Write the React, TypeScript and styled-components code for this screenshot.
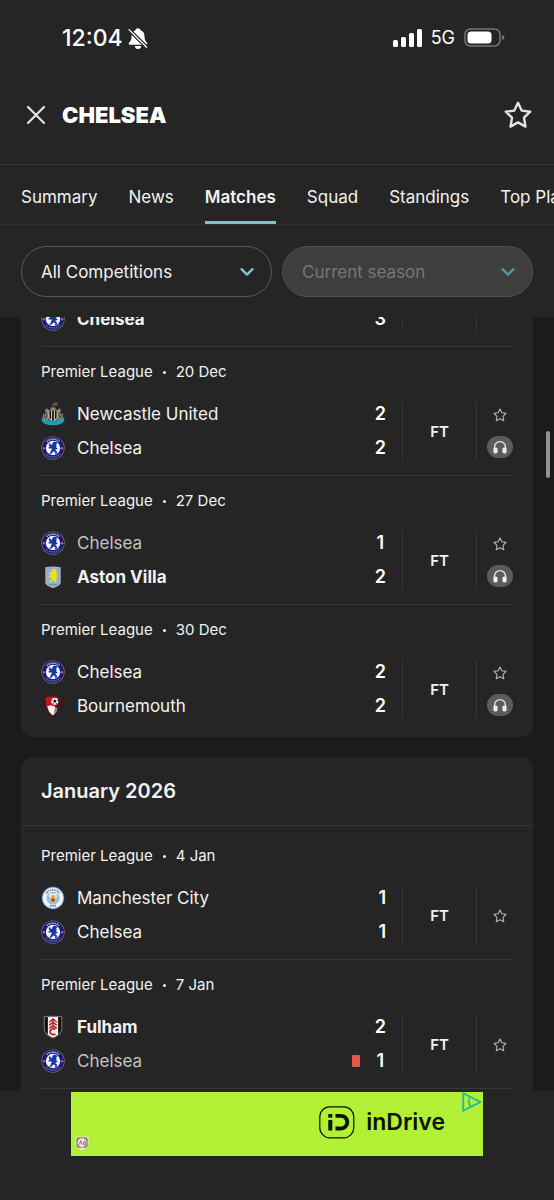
import React from "react";
import styled, { createGlobalStyle } from "styled-components";

const color = {
  page: "#1b1b1b",
  surface: "#252525",
  line: "#373737",
  text: "#f2f2f2",
  muted: "#c4c4c4",
  accent: "#7cc5d1",
};

const GlobalStyle = createGlobalStyle`
  * { box-sizing: border-box; }
  body {
    margin: 0;
    background: ${color.page};
    color: ${color.text};
    font-family: Inter, "Liberation Sans", sans-serif;
    -webkit-font-smoothing: antialiased;
  }
  button, select { font-family: inherit; }
`;

const Screen = styled.div`
  position: relative;
  display: flex;
  flex-direction: column;
  height: 100vh;
  overflow: hidden;
`;

const TopArea = styled.header`
  flex: none;
  background: ${color.surface};
`;

const StatusBar = styled.div`
  display: flex;
  align-items: center;
  justify-content: space-between;
  height: 76px;
  padding: 0 49px 0 62px;
  color: #fff;
`;

const StatusGroup = styled.div<{ $gap: number }>`
  display: flex;
  align-items: center;
  gap: ${(p) => p.$gap}px;
`;

const Clock = styled.time`
  font-size: 23px;
  line-height: 28px;
  font-weight: 500;
`;

const Network = styled.span`
  font-size: 18px;
  line-height: 24px;
`;

const TitleBar = styled.div`
  display: flex;
  align-items: center;
  height: 89px;
  padding: 0 22px 10px 24px;
  border-bottom: 1px solid ${color.line};
`;

const IconButton = styled.button`
  display: grid;
  place-items: center;
  padding: 0;
  border: 0;
  background: none;
  color: #e4e4e4;
`;

const Title = styled.h1`
  flex: 1;
  margin: 0 0 0 14px;
  color: #fff;
  font-size: 22px;
  line-height: 28px;
  font-weight: 900;
`;

const Tabs = styled.nav`
  display: flex;
  gap: 31px;
  height: 60px;
  padding: 0 21px;
  overflow: hidden;
  border-bottom: 1px solid #303030;
`;

const Tab = styled.a<{ $active?: boolean }>`
  flex: none;
  padding-top: 20px;
  border-bottom: 3px solid ${(p) => (p.$active ? color.accent : "transparent")};
  color: ${color.text};
  font-size: 17px;
  line-height: 24px;
  font-weight: ${(p) => (p.$active ? 600 : 400)};
  text-decoration: none;
  white-space: nowrap;
`;

const Filters = styled.div`
  display: grid;
  grid-template-columns: 1fr 1fr;
  gap: 10px;
  padding: 21px 21px 20px;
`;

const FilterBox = styled.label`
  position: relative;
  display: block;
`;

const FilterSelect = styled.select`
  display: block;
  width: 100%;
  height: 51px;
  padding: 0 48px 0 19px;
  appearance: none;
  border: 1px solid #5a5a5a;
  border-radius: 26px;
  background: ${color.surface};
  color: ${color.text};
  font-size: 17px;
  opacity: 1;

  &:disabled {
    border-color: #505050;
    background: #3e3e3e;
    color: #767676;
  }
`;

const FilterChevron = styled.svg<{ $dim?: boolean }>`
  position: absolute;
  top: 18px;
  right: 17px;
  pointer-events: none;
  color: ${(p) => (p.$dim ? "#5895a0" : color.accent)};
`;

const Feed = styled.main`
  flex: 1;
  min-height: 0;
  padding: 0 21px;
  overflow: hidden;
`;

const Card = styled.section<{ $continued?: boolean; $more?: boolean }>`
  margin-bottom: 20px;
  padding-bottom: ${(p) => (p.$more ? 32 : 4)}px;
  overflow: hidden;
  border-radius: ${(p) => (p.$continued ? "0 0 12px 12px" : "12px")};
  background: ${color.surface};
`;

const CardTitle = styled.h2`
  margin: 0 0 5px;
  padding: 20px 20px;
  border-bottom: 1px solid ${color.line};
  color: ${color.text};
  font-size: 20px;
  line-height: 28px;
  font-weight: 600;
`;

const MatchItem = styled.article<{ $last?: boolean; $scrolled?: boolean }>`
  margin: ${(p) => (p.$scrolled ? "-10px" : "0")} 20px 0;
  padding: ${(p) => (p.$scrolled ? "0" : "13px")} 0 15px;
  border-bottom: ${(p) => (p.$last ? "0" : `1px solid ${color.line}`)};
`;

const Meta = styled.p`
  display: flex;
  align-items: center;
  gap: 10px;
  margin: 0 0 18px;
  font-size: 15px;
  line-height: 24px;
`;

const Dot = styled.span`
  width: 3px;
  height: 3px;
  border-radius: 50%;
  background: ${color.text};
`;

const MatchBody = styled.div`
  display: flex;
`;

const Teams = styled.div`
  display: flex;
  flex: 1;
  flex-direction: column;
  gap: 10px;
`;

const Team = styled.div<{ $result: Result }>`
  display: flex;
  align-items: center;
  gap: 12px;
  height: 24px;
  color: ${(p) => (p.$result === "lost" ? color.muted : color.text)};
  font-size: 17px;
  line-height: 24px;
  font-weight: ${(p) => (p.$result === "won" ? 700 : 400)};
`;

const TeamName = styled.span`
  flex: 1;
`;

const RedCard = styled.span`
  width: 8px;
  height: 12px;
  margin-right: 15px;
  border-radius: 1px;
  background: #e8534c;
`;

const Scores = styled.div`
  display: flex;
  flex-direction: column;
  align-items: center;
  gap: 10px;
  padding-right: 16px;
  color: #fff;
  font-size: 18px;
  line-height: 24px;
  font-weight: 600;
`;

const Status = styled.div`
  display: grid;
  place-items: center;
  width: 75px;
  border: solid ${color.line};
  border-width: 0 1px;
  font-size: 15px;
  font-weight: 600;
`;

const Actions = styled.div`
  display: flex;
  flex-direction: column;
  align-items: center;
  justify-content: center;
  gap: 10px;
  width: 36px;
  padding-left: 10px;
`;

const StarButton = styled(IconButton)`
  width: 24px;
  height: 24px;
  padding-top: 1px;
  color: #b4b4b4;
`;

const AudioButton = styled(IconButton)`
  width: 26px;
  height: 22px;
  margin-bottom: 2px;
  border-radius: 11px;
  background: #5b5b5b;
  color: #ececec;
`;

const ScrollThumb = styled.div`
  position: absolute;
  top: 431px;
  right: 4px;
  width: 4px;
  height: 47px;
  border-radius: 2px;
  background: #929292;
`;

const AdArea = styled.footer`
  display: flex;
  flex: none;
  justify-content: center;
  padding: 1px 0 44px;
  background: ${color.surface};
`;

const Banner = styled.a`
  position: relative;
  display: flex;
  align-items: center;
  justify-content: flex-end;
  gap: 11px;
  width: 412px;
  height: 64px;
  padding: 0 38px 4px 0;
  background: #b1f035;
  color: #0c1404;
  text-decoration: none;
`;

const BannerName = styled.span`
  font-size: 23px;
  line-height: 28px;
  font-weight: 600;
`;

const AdChoices = styled.svg`
  position: absolute;
  top: 0;
  right: 1px;
`;

const AdBadge = styled.svg`
  position: absolute;
  left: 4px;
  bottom: 6px;
`;

type Result = "won" | "lost" | "drew";
type Club = "Chelsea" | "Newcastle United" | "Aston Villa" | "Bournemouth" | "Manchester City" | "Fulham";

interface Side {
  club: Club;
  score: number;
  sentOff?: boolean;
}

interface Match {
  date: string;
  sides: [Side, Side];
  audio?: boolean;
}

const december: Match[] = [
  { date: "20 Dec", audio: true, sides: [{ club: "Newcastle United", score: 2 }, { club: "Chelsea", score: 2 }] },
  { date: "27 Dec", audio: true, sides: [{ club: "Chelsea", score: 1 }, { club: "Aston Villa", score: 2 }] },
  { date: "30 Dec", audio: true, sides: [{ club: "Chelsea", score: 2 }, { club: "Bournemouth", score: 2 }] },
];

const january: Match[] = [
  { date: "4 Jan", sides: [{ club: "Manchester City", score: 1 }, { club: "Chelsea", score: 1 }] },
  { date: "7 Jan", sides: [{ club: "Fulham", score: 2 }, { club: "Chelsea", score: 1, sentOff: true }] },
];

const tabs = ["Summary", "News", "Matches", "Squad", "Standings", "Top Players"];

const crests: Record<Club, React.ReactNode> = {
  Chelsea: (
    <>
      <circle cx="12" cy="12" r="11.6" fill="#8d8068" />
      <circle cx="12" cy="12" r="11" fill="#171b78" />
      <path d="M5.8 5.6a8.9 8.9 0 0 1 12.4 0" fill="none" stroke="#c4c7e4" strokeWidth="1.6" strokeDasharray="1.3 .8" />
      <path d="M5 17.6a8.9 8.9 0 0 0 14 0" fill="none" stroke="#7f84c2" strokeWidth="1.4" strokeDasharray="1 .9" />
      <circle cx="2.900" cy="12.200" r="1.300" fill="#c85a78" />
      <circle cx="21.100" cy="12.200" r="1.300" fill="#c85a78" />
      <circle cx="12" cy="12" r="7.200" fill="#f5f6fb" />
      <path
        d="M7.800 8l1.400-1.200.5 1.900 1.300.3.400-1.900 1.900-1.500 2.100.6 1 1.300-1.300.9.600 1.700-.8 1.300 1.700.6-.3 1.300-1.600-.1-.2 1 1.700 1.500-.4 1.900-1.800.6.300-1.600-1.500-1-1.100.2-.4 1.400-2 .5-1.100-.8 1.500-.8.2-1.600 1-1.300-.8-.9-2 .5-.8-1.200 1.900-1-1.300-.8z"
        fill="#1935a4"
      />
    </>
  ),
  "Newcastle United": (
    <>
      <path d="M12 1v5M12.300 1.200h4l-1 1 1 1h-4" fill="#a03a2c" stroke="#7d6d4c" strokeWidth=".7" />
      <path d="M9.200 5.600h5.600l-.5 2.600H9.700z" fill="#8b8574" />
      <path d="M4.200 7.400l2-1.200 1.500 2.200-.6 3 1.300 1.600-1 5.400-3.600-.9-2-2.200.2-4 1.400 1.200 1-1.300z" fill="#8c8371" />
      <path d="M19.800 7.400l-2-1.200-1.500 2.200.6 3-1.300 1.600 1 5.400 3.600-.9 2-2.200-.2-4-1.400 1.200-1-1.300z" fill="#8c8371" />
      <path d="M4 9.600l2 3.400-.8 3M20 9.600L18 13l.8 3M2.900 13l1.600 3M21.100 13l-1.600 3" fill="none" stroke="#34322e" strokeWidth=".8" />
      <path d="M7.400 8.200h9.200v6.400c0 2.400-2 4.200-4.600 5.200-2.600-1-4.600-2.800-4.600-5.200z" fill="#d9d1bf" />
      <path d="M8.400 8.600h1.700v9l-1.700-1.700zM11.100 8.600h1.800V19h-1.800zM13.900 8.600h1.700v7.300l-1.700 1.700z" fill="#1a1a1a" />
      <path d="M.8 15.400c3 1 4.800 3 11.200 3s8.200-2 11.200-3v3.600c-2 3-5.900 4.200-11.200 4.200S2.800 22 .8 19z" fill="#259fb8" />
      <path d="M4 19.300c4.800 2.200 11.200 2.200 16 0" fill="none" stroke="#1d86a0" strokeWidth="1" strokeDasharray="1.200 .800" />
    </>
  ),
  "Aston Villa": (
    <>
      <path d="M4.300 2.200Q12 .8 19.700 2.200v15.600Q19 21 12 23.200 5 21 4.300 17.800z" fill="#c3a9bc" />
      <path d="M5.300 3.100Q12 1.900 18.700 3.100v14.500Q18 20.200 12 22.200 6 20.200 5.300 17.600z" fill="#86b2d6" />
      <path
        d="M10.700 4.200l3.200-.6 1.900 1.800-.8 1.400 1.500 1.400-1 2 1 1.600-1.500 1.200.8 2-.8 2.200-1.900.6.300-2.200-1.600-.6-.9 1.800-2.600.8-.3-1.600 1.800-1 .6-2.400-2.400.2-.7-1.500 2.400-1.200-1.900-1.400.5-1.700 2 .5z"
        fill="#f0dc1e"
      />
      <path d="M8 19.400q4 1.200 8 0" fill="none" stroke="#6a84ad" strokeWidth="1" />
    </>
  ),
  Bournemouth: (
    <>
      <path d="M3 2.200q9-1.600 18 0l-1 9.300q-1.500 7-8 11.500-6.500-4.500-8-11.500z" fill="#3a1413" />
      <path d="M4.200 3.200q7.800-1.300 15.600 0l-.9 8q-1.500 6.200-6.900 10.300-5.400-4.100-6.900-10.300z" fill="#c3161c" />
      <path d="M17 3l2.800.2-.9 8q-1.500 6.200-6.900 10.300z" fill="#451b1a" />
      <path d="M6.200 12.500l3.300-1.200 3.700 1 2.600 2.700-1.600 4.200-2.400 2.300-3.600-3.600z" fill="#f5f2f1" />
      <path d="M14 13.200l2.600.6-.8 3.600-3 3.400.6-4z" fill="#8d8583" />
      <circle cx="13.800" cy="7.200" r="3.500" fill="#f8f8f8" />
      <path d="M13.800 5.600l1.600 1.100-.6 1.900h-2l-.6-1.900z" fill="#111" />
      <path d="M13.800 3.700v1M17 6.400l-1 .4M15.800 10l-.7-.9M11.800 10l.7-.9M10.600 6.400l1 .4" stroke="#222" strokeWidth=".9" />
    </>
  ),
  "Manchester City": (
    <>
      <circle cx="12" cy="12" r="11.400" fill="#3d678e" />
      <circle cx="12" cy="12" r="10.700" fill="#b5d9ee" />
      <circle cx="12" cy="12" r="9.900" fill="#f0f4f6" />
      <path d="M5.300 7.400a8.100 8.100 0 0 1 13.400 0" fill="none" stroke="#54708f" strokeWidth="1.700" strokeDasharray="1 .700" />
      <path d="M9 19.500a8.100 8.100 0 0 0 6 0" fill="none" stroke="#54708f" strokeWidth="1.700" strokeDasharray="1 .700" />
      <circle cx="12" cy="12.200" r="6.500" fill="#8dbfe0" />
      <path d="M8 7.600h8v5.200q-.8 3.600-4 5.300-3.200-1.700-4-5.300z" fill="#d9c27c" />
      <path d="M8 7.600h8v3.700H8z" fill="#f1ead0" />
      <path d="M10 9.400h4l-.6 1.500h-2.800z" fill="#b59345" />
      <circle cx="12" cy="14" r="2" fill="#b14850" />
    </>
  ),
  Fulham: (
    <>
      <path d="M2.800 1.600q9.200-1.700 18.400 0v13.200q-1.500 5.400-9.200 8.600-7.700-3.200-9.200-8.600z" fill="#909090" />
      <path d="M3.600 2.300q8.400-1.500 16.800 0v12.400q-1.500 4.700-8.400 7.800-6.900-3.100-8.400-7.800z" fill="#111" />
      <path d="M6.900 2q5.100-.7 10.200 0v17.400q-2 1.800-5.100 3.100-3.100-1.300-5.100-3.100z" fill="#f7f5f4" />
      <path d="M8.200 7.200L12 4l3.800 3.200M8.200 10.400L12 7.200l3.800 3.200M8.200 13.400l3.800-3 3.800 3M12 4v9" fill="none" stroke="#bb2025" strokeWidth="1.400" />
      <path d="M14.500 14.200q-2.400-1.200-4.300.2-2 2-.6 4 2 1.900 4.900.6" fill="none" stroke="#bb2025" strokeWidth="1.700" />
    </>
  ),
};

const Crest = ({ club }: { club: Club }) => (
  <svg width="24" height="24" viewBox="0 0 24 24" aria-hidden="true">
    {crests[club]}
  </svg>
);

const Star = ({ size, weight }: { size: number; weight: number }) => (
  <svg width={size} height={size} viewBox="0 0 28 28" fill="none" stroke="currentColor" strokeWidth={weight} strokeLinejoin="round" aria-hidden="true">
    <path d="M14 1.800L17.700 9.600L26.200 10.700L20 16.700L21.500 25.600L14 21.400L6.500 25.600L8 16.700L1.800 10.700L10.300 9.600Z" />
  </svg>
);

const Headphones = () => (
  <svg width="14" height="13" viewBox="0 0 14 13" aria-hidden="true">
    <path d="M1.500 8V6.200a5.500 5.500 0 0 1 11 0V8" fill="none" stroke="currentColor" strokeWidth="1.300" />
    <rect x="0.400" y="6.400" width="4.200" height="6" rx="1.700" fill="currentColor" />
    <rect x="9.400" y="6.400" width="4.200" height="6" rx="1.700" fill="currentColor" />
  </svg>
);

const Chevron = ({ dim }: { dim?: boolean }) => (
  <FilterChevron $dim={dim} width="16" height="16" viewBox="0 0 16 16" fill="none" stroke="currentColor" strokeWidth="2.400" strokeLinecap="round" strokeLinejoin="round">
    <path d="M2.500 5.200L8 10.600L13.500 5.200" />
  </FilterChevron>
);

const resultOf = (own: number, other: number): Result => (own > other ? "won" : own < other ? "lost" : "drew");

const MatchRow = ({ match, last }: { match: Match; last?: boolean }) => {
  const [home, away] = match.sides;
  return (
    <MatchItem $last={last}>
      <Meta>
        Premier League <Dot /> {match.date}
      </Meta>
      <MatchBody>
        <Teams>
          {match.sides.map((side) => (
            <Team key={side.club} $result={side === home ? resultOf(home.score, away.score) : resultOf(away.score, home.score)}>
              <Crest club={side.club} />
              <TeamName>{side.club}</TeamName>
              {side.sentOff && <RedCard />}
            </Team>
          ))}
        </Teams>
        <Scores>
          <span>{home.score}</span>
          <span>{away.score}</span>
        </Scores>
        <Status>FT</Status>
        <Actions>
          <StarButton aria-label="Follow match">
            <Star size={14} weight={2.200} />
          </StarButton>
          {match.audio && (
            <AudioButton aria-label="Listen">
              <Headphones />
            </AudioButton>
          )}
        </Actions>
      </MatchBody>
    </MatchItem>
  );
};

export default function App() {
  return (
    <Screen>
      <GlobalStyle />
      <TopArea>
        <StatusBar>
          <StatusGroup $gap={5}>
            <Clock>12:04</Clock>
            <svg width="20" height="21" viewBox="0 0 20 21" aria-hidden="true">
              <path d="M10 .3c-1.400 0-2.400.9-2.600 2C4.600 3.200 3.500 5.600 3.500 8.600c0 3.200-.7 4.200-2.300 5.900-1 1-.6 2.200.9 2.200h15.800c1.500 0 1.900-1.200.9-2.200-1.600-1.700-2.300-2.700-2.300-5.900 0-3-1.100-5.400-3.900-6.300C12.400 1.200 11.400.3 10 .3zM6.900 17.900a3.100 3 0 0 0 6.200 0z" fill="#fff" />
              <path d="M0 .6L19.500 20.100" stroke="#252525" strokeWidth="3.600" />
              <path d="M1 1.600L18.600 19.200" stroke="#fff" strokeWidth="1.300" strokeLinecap="round" />
            </svg>
          </StatusGroup>
          <StatusGroup $gap={9}>
            <svg width="29" height="19" viewBox="0 0 29 19" fill="#fff" aria-hidden="true">
              <rect x="0" y="11" width="5" height="7" rx="1.500" />
              <rect x="8" y="8" width="5" height="10" rx="1.500" />
              <rect x="16" y="4" width="5" height="14" rx="1.500" />
              <rect x="24" y="0" width="5" height="18" rx="1.500" />
            </svg>
            <Network>5G</Network>
            <svg width="41" height="20" viewBox="0 0 41 20" aria-hidden="true">
              <rect x="1" y="1" width="35" height="17" rx="5.500" fill="none" stroke="#757575" strokeWidth="1.500" />
              <rect x="3.500" y="3.500" width="24" height="12" rx="3.500" fill="#fff" />
              <path d="M38 7q2.500.8 2.500 2.500T38 12z" fill="#757575" />
            </svg>
          </StatusGroup>
        </StatusBar>

        <TitleBar>
          <IconButton aria-label="Close">
            <svg width="24" height="24" viewBox="0 0 24 24" stroke="currentColor" strokeWidth="2.200" strokeLinecap="round">
              <path d="M4 4L20 20M20 4L4 20" />
            </svg>
          </IconButton>
          <Title>CHELSEA</Title>
          <IconButton aria-label="Favourite team">
            <Star size={28} weight={2.400} />
          </IconButton>
        </TitleBar>

        <Tabs>
          {tabs.map((name) => (
            <Tab key={name} href="#" $active={name === "Matches"}>
              {name}
            </Tab>
          ))}
        </Tabs>

        <Filters>
          <FilterBox>
            <FilterSelect aria-label="Competition">
              <option>All Competitions</option>
            </FilterSelect>
            <Chevron />
          </FilterBox>
          <FilterBox>
            <FilterSelect aria-label="Season" disabled>
              <option>Current season</option>
            </FilterSelect>
            <Chevron dim />
          </FilterBox>
        </Filters>
      </TopArea>

      <Feed>
        <Card $continued>
          <MatchItem $scrolled>
            <MatchBody>
              <Teams>
                <Team $result="won">
                  <Crest club="Chelsea" />
                  <TeamName>Chelsea</TeamName>
                </Team>
              </Teams>
              <Scores>
                <span>3</span>
              </Scores>
              <Status />
              <Actions />
            </MatchBody>
          </MatchItem>
          {december.map((match, i) => (
            <MatchRow key={match.date} match={match} last={i === december.length - 1} />
          ))}
        </Card>
        <Card $more>
          <CardTitle>January 2026</CardTitle>
          {january.map((match) => (
            <MatchRow key={match.date} match={match} />
          ))}
        </Card>
      </Feed>

      <AdArea>
        <Banner href="#">
          <svg width="36" height="33" viewBox="0 0 36 33" aria-hidden="true">
            <rect x="0.800" y="0.800" width="34" height="31" rx="10" fill="none" stroke="#0c1404" strokeWidth="1.200" />
            <rect x="9.300" y="8" width="4" height="3.600" fill="#0c1404" />
            <rect x="9.300" y="14" width="4" height="10.500" fill="#0c1404" />
            <path d="M16.500 9.900h5.500a6.300 6.300 0 0 1 0 12.600h-5.500" fill="none" stroke="#0c1404" strokeWidth="3.900" />
          </svg>
          <BannerName>inDrive</BannerName>
          <AdChoices width="20" height="20" viewBox="0 0 20 20" aria-hidden="true">
            <path d="M1.200 1.200L18.500 10L1.200 18.800Z" fill="none" stroke="#20b8a6" strokeWidth="1.800" strokeLinejoin="round" />
            <circle cx="7.200" cy="6.700" r="1.100" fill="#20b8a6" />
            <path d="M5.500 9.300h1.900v4.200h1.900" fill="none" stroke="#20b8a6" strokeWidth="1.500" />
          </AdChoices>
          <AdBadge width="14" height="14" viewBox="0 0 14 14" aria-hidden="true">
            <path d="M3 .5h8Q13.500.5 13.500 3v6.500Q13.500 11 11.500 11.800L7 14l-4.500-2.200Q.5 11 .5 9.500V3Q.5.5 3 .5z" fill="#f3eee6" />
            <rect x="1.300" y="1.300" width="11.400" height="10.400" rx="2" fill="#8d8474" />
            <circle cx="7" cy="6.600" r="4.400" fill="#efe6e2" />
            <path d="M4.300 8.600L5.700 4.700L7 8.600M8.600 5.700h1.600v2.800H8.400V6" fill="none" stroke="#96666a" strokeWidth=".9" />
          </AdBadge>
        </Banner>
      </AdArea>
      <ScrollThumb />
    </Screen>
  );
}
